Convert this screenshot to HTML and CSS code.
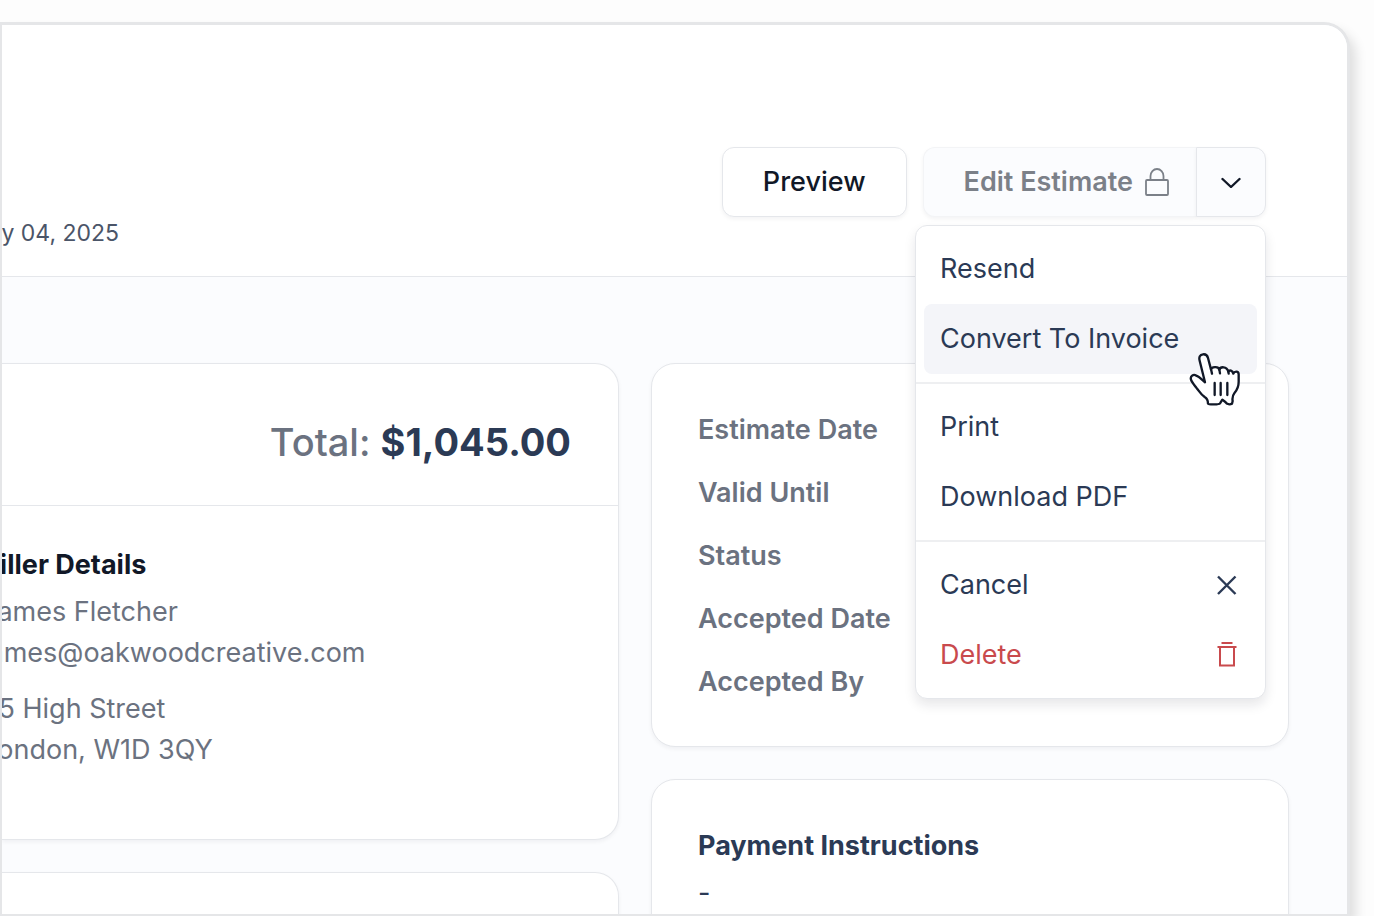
FILE: index.html
```html
<!DOCTYPE html>
<html lang="en">
<head>
    <meta charset="UTF-8">
    <meta name="viewport" content="width=device-width, initial-scale=1.0">
    <title>Estimate</title>
    <link rel="stylesheet" href="styles.css">
</head>
<body>
    <div class="window">
        <!-- Header -->
        <header class="topbar">
            <p class="issued">July 04, 2025</p>
            <div class="actions">
                <button type="button" class="btn">Preview</button>
                <div class="split">
                    <button type="button" class="btn btn-edit" disabled>
                        Edit Estimate
                        <svg class="icon-lock" viewBox="0 0 24 28" fill="none" stroke="currentColor" stroke-width="1.800" stroke-linejoin="round">
                            <rect x="1" y="12" width="22" height="15" rx="1"/>
                            <path d="M5.500 12V8a6.500 7 0 0 1 13 0v4"/>
                        </svg>
                    </button>
                    <button type="button" class="btn btn-toggle" id="menuToggle" aria-label="More actions" aria-expanded="true">
                        <svg class="icon-chevron" viewBox="0 0 20 12" fill="none" stroke="currentColor" stroke-width="2.400" stroke-linecap="round" stroke-linejoin="round">
                            <path d="M1.500 3 10 11l8.500-8"/>
                        </svg>
                    </button>

                    <!-- Dropdown menu -->
                    <div class="menu" id="menu">
                        <div class="menu-group">
                            <button type="button" class="menu-item">Resend</button>
                            <button type="button" class="menu-item active">
                                Convert To Invoice
                                <svg class="pointer" viewBox="117 66 156 162" fill="#fff" stroke="#111827" stroke-width="7" stroke-linejoin="round" stroke-linecap="round">
                                    <path d="M165 157 149 92C146 81 150 74 159 73C167 72 172 76 174 84L183 118C184 111 205 107 208 119C211 109 230 108 235 125C239 119 247 121 250 131C253 123 266 122 266 133V155C266 168 263 177 254 188C248 196 246 203 248 213L246 221C240 224 231 223 226 216L217 209L210 220C207 224 176 224 174 221C174 211 171 205 164 201C151 192 148 184 139 173C133 165 125 156 123 149C120 139 130 131 139 137C149 141 154 148 165 157Z"/>
                                    <path d="M183 117 186 131M208 118 210 130M235 123 236 131M194 159V195M212 159V195M232 159V195"/>
                                </svg>
                            </button>
                        </div>
                        <div class="menu-group">
                            <button type="button" class="menu-item">Print</button>
                            <button type="button" class="menu-item">Download PDF</button>
                        </div>
                        <div class="menu-group">
                            <button type="button" class="menu-item">
                                Cancel
                                <svg class="menu-icon" viewBox="0 0 24 28" fill="none" stroke="currentColor" stroke-width="2.400">
                                    <path d="M3 5.500l17.500 17.500M20.500 5.500l-17.500 17.500"/>
                                </svg>
                            </button>
                            <button type="button" class="menu-item danger">
                                Delete
                                <svg class="menu-icon" viewBox="0 0 24 28" fill="none" stroke="currentColor" stroke-width="2">
                                    <path d="M6.500 2h11M2.500 6h19M5 6v18.500h14V6"/>
                                </svg>
                            </button>
                        </div>
                    </div>
                </div>
            </div>
        </header>

        <!-- Estimate -->
        <main class="content">
            <div class="column">
                <section class="card card-left">
                    <div class="total">Total: <strong>$1,045.00</strong></div>
                    <div class="biller">
                        <h2>Biller Details</h2>
                        <p>James Fletcher<br>james@oakwoodcreative.com</p>
                        <p>25 High Street<br>London, W1D 3QY</p>
                    </div>
                </section>
                <section class="card card-left card-items"></section>
            </div>

            <div class="column">
                <section class="card">
                    <ul class="facts">
                        <li>Estimate Date</li>
                        <li>Valid Until</li>
                        <li>Status</li>
                        <li>Accepted Date</li>
                        <li>Accepted By</li>
                    </ul>
                </section>
                <section class="card payment">
                    <h2>Payment Instructions</h2>
                    <p>-</p>
                </section>
            </div>
        </main>
    </div>

    <script>
        const menuToggle = document.getElementById('menuToggle');
        const menu = document.getElementById('menu');

        menuToggle.addEventListener('click', () => {
            menu.hidden = !menu.hidden;
            menuToggle.setAttribute('aria-expanded', String(!menu.hidden));
        });
    </script>
</body>
</html>
```
FILE: styles.css
```css
* {
    box-sizing: border-box;
}

body {
    margin: 0;
    height: 100vh;
    padding: 22px 24px 0 0;
    background: #fdfdfd;
    color: #2b3a55;
    font-family: Inter, "Liberation Sans", sans-serif;
    font-size: 27px;
    line-height: 40px;
    overflow: hidden;
}

h2,
p,
ul {
    margin: 0;
    padding: 0;
}

h2 {
    font-size: 27px;
    font-weight: 700;
}

.window {
    display: flex;
    flex-direction: column;
    height: 100%;
    border: solid #e5e6e8;
    border-width: 3px 3px 2px 2px;
    border-radius: 0 26px 0 0;
    background: #fbfcfe;
    box-shadow: 6px 8px 12px rgba(0, 0, 0, 0.12);
    overflow: hidden;
}

/* Header */
.topbar {
    display: flex;
    flex-shrink: 0;
    justify-content: space-between;
    align-items: flex-start;
    padding: 122px 81px 23px 0;
    border-bottom: 1px solid #e5e7eb;
    background: #fff;
}

.issued {
    margin: 66px 0 0 -33px;
    color: #4b5568;
    font-size: 23px;
}

.actions {
    display: flex;
    gap: 16px;
}

.btn {
    height: 70px;
    padding: 0 40px;
    border: 1px solid #e5e7eb;
    border-radius: 12px;
    background: #fff;
    box-shadow: 0 2px 4px rgba(17, 24, 39, 0.05);
    color: #111827;
    font: inherit;
    font-weight: 500;
    cursor: pointer;
}

.split {
    display: flex;
    position: relative;
}

.btn-edit {
    display: flex;
    align-items: center;
    gap: 12px;
    padding-right: 27px;
    border-color: #f3f4f6;
    border-right: 0;
    border-radius: 12px 0 0 12px;
    background: #fbfcfe;
    color: #7b8088;
    font-weight: 600;
    cursor: default;
}

.btn-toggle {
    width: 70px;
    padding: 0;
    border-radius: 0 12px 12px 0;
    background: #fbfcfe;
}

.icon-lock {
    width: 24px;
    height: 28px;
}

.icon-chevron {
    display: block;
    width: 20px;
    height: 12px;
    margin: 0 auto;
}

/* Dropdown menu */
.menu {
    position: absolute;
    top: 78px;
    right: 0;
    z-index: 10;
    width: 351px;
    border: 1px solid #e5e7eb;
    border-radius: 12px;
    background: #fff;
    box-shadow: 0 6px 12px rgba(17, 24, 39, 0.1);
}

.menu-group {
    padding: 8px;
}

.menu-group + .menu-group {
    border-top: 2px solid #eeeff1;
}

.menu-item {
    display: flex;
    position: relative;
    justify-content: space-between;
    align-items: center;
    width: 100%;
    height: 70px;
    padding: 0 18px 0 16px;
    border: 0;
    border-radius: 8px;
    background: none;
    color: #2b3a55;
    font: inherit;
    cursor: pointer;
}

.menu-item:hover,
.menu-item.active {
    background: #f4f5f9;
}

.menu-item.danger {
    color: #c94a4d;
}

.menu-icon {
    width: 24px;
    height: 28px;
}

.pointer {
    position: absolute;
    top: 48px;
    right: 16px;
    z-index: 1;
    width: 52px;
    height: 54px;
}

/* Cards */
.content {
    display: grid;
    grid-template-columns: minmax(0, 1fr) 638px;
    gap: 32px;
    padding: 86px 58px 0 0;
}

.column {
    display: flex;
    flex-direction: column;
    gap: 32px;
}

.card {
    padding: 46px 46px 45px;
    border: 1px solid #e5e7eb;
    border-radius: 24px;
    background: #fff;
    box-shadow: 0 2px 4px rgba(17, 24, 39, 0.05);
}

.card-left {
    padding: 0;
    border-left: 0;
    border-radius: 0 24px 24px 0;
}

.card-items {
    height: 240px;
}

.total {
    padding: 58px 47px 43px 0;
    border-bottom: 1px solid #e5e7eb;
    color: #6b7280;
    font-size: 38px;
    font-weight: 500;
    text-align: right;
}

.total strong {
    color: #2b3a55;
    font-weight: 700;
}

.biller {
    margin-left: -20px;
    padding: 38px 0 69px;
    color: #6b7280;
    line-height: 41px;
}

.biller h2 {
    margin-bottom: 6px;
    color: #111827;
}

.biller p + p {
    margin-top: 15px;
}

.facts {
    display: flex;
    flex-direction: column;
    gap: 24px;
    color: #6b7280;
    font-weight: 600;
    line-height: 39px;
    list-style: none;
}

.payment {
    height: 320px;
}

.payment p {
    margin-top: 7px;
}
```
